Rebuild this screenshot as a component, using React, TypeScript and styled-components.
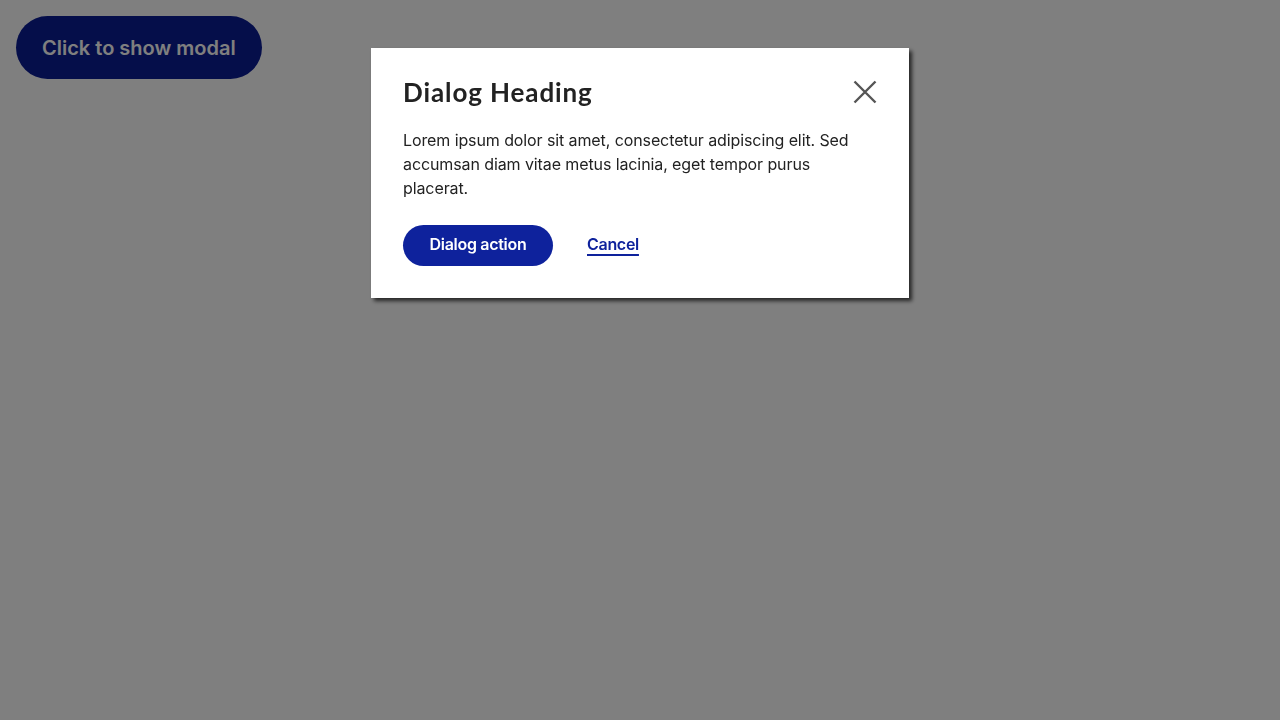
import React from "react";
import styled, { createGlobalStyle } from "styled-components";

const Global = createGlobalStyle`
  html, body { margin: 0; padding: 0; background: #fff; }
  body { font-family: "Inter", "Liberation Sans", sans-serif; }
  * { box-sizing: border-box; }
`;

const Page = styled.div`
  padding: 16px;
  min-height: 720px;
`;

const ShowButton = styled.button`
  height: 63px;
  padding: 0 26px;
  border: none;
  border-radius: 999px;
  background: #0b1c94;
  color: #fff;
  font-family: "Inter", "Liberation Sans", sans-serif;
  font-size: 20px;
  font-weight: 600;
  letter-spacing: 0;
  cursor: pointer;
`;

const Overlay = styled.div`
  position: fixed;
  inset: 0;
  background: rgba(0, 0, 0, 0.5);
  display: flex;
  justify-content: center;
  align-items: flex-start;
  padding-top: 48px;
`;

const Dialog = styled.div`
  width: 538px;
  background: #fff;
  padding: 26px 32px 32px;
  box-shadow: 3px 3px 4px rgba(0, 0, 0, 0.7);
  display: flex;
  flex-direction: column;
`;

const Header = styled.div`
  display: flex;
  align-items: center;
  justify-content: space-between;
  height: 36px;
`;

const Heading = styled.h2`
  margin: 0;
  font-family: "Lato", "Inter", sans-serif;
  font-size: 26px;
  font-weight: 700;
  color: #222;
  letter-spacing: 0.9px;
`;

const CloseButton = styled.button`
  width: 28px;
  height: 28px;
  padding: 0;
  margin-right: -2px;
  border: none;
  background: none;
  display: flex;
  align-items: center;
  justify-content: center;
  cursor: pointer;
`;

const Body = styled.p`
  margin: 18px 0 0;
  font-family: "Inter", "Liberation Sans", sans-serif;
  font-size: 16px;
  line-height: 24px;
  letter-spacing: -0.1px;
  color: #222;
`;

const Actions = styled.div`
  display: flex;
  align-items: center;
  gap: 34px;
  margin-top: 25px;
`;

const PrimaryButton = styled.button`
  height: 41px;
  width: 150px;
  padding: 0 0 3px;
  border: none;
  border-radius: 999px;
  background: #0e229c;
  color: #fff;
  font-family: "Inter", "Liberation Sans", sans-serif;
  font-size: 16px;
  font-weight: 600;
  letter-spacing: -0.3px;
  cursor: pointer;
`;

const LinkButton = styled.button`
  border: none;
  background: none;
  padding: 0 0 4px;
  color: #0e229c;
  font-family: "Inter", "Liberation Sans", sans-serif;
  font-size: 16px;
  font-weight: 600;
  letter-spacing: -0.3px;
  text-decoration: underline;
  text-decoration-thickness: 2px;
  text-underline-offset: 4px;
  cursor: pointer;
`;

export default function App() {
  return (
    <>
      <Global />
      <Page>
        <ShowButton>Click to show modal</ShowButton>
      </Page>
      <Overlay>
        <Dialog role="dialog">
          <Header>
            <Heading>Dialog Heading</Heading>
            <CloseButton aria-label="Close">
              <svg width="24" height="24" viewBox="0 0 24 24">
                <path d="M1.5 1.5 L22.5 22.5 M22.5 1.5 L1.5 22.5" stroke="#555" strokeWidth="2.4" strokeLinecap="butt" />
              </svg>
            </CloseButton>
          </Header>
          <Body>
            Lorem ipsum dolor sit amet, consectetur adipiscing elit. Sed accumsan diam vitae metus lacinia, eget tempor purus placerat.
          </Body>
          <Actions>
            <PrimaryButton>Dialog action</PrimaryButton>
            <LinkButton>Cancel</LinkButton>
          </Actions>
        </Dialog>
      </Overlay>
    </>
  );
}
